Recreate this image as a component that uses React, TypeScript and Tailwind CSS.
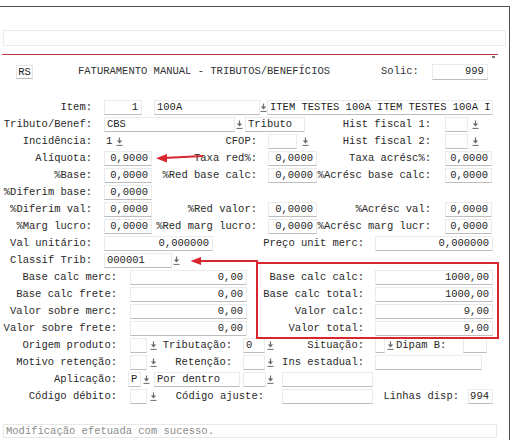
import React from 'react'

type P = { className?: string; children?: React.ReactNode }

const Drop = ({ className = '' }: P) => (
  <span className={`flex h-[15px] shrink-0 items-center justify-center ${className}`}>
    <svg width="7" height="9" viewBox="0 0 7 9">
      <path d="M3.5 0.5v4" stroke="#6b6b6b" strokeWidth="1.2" />
      <path d="M0.8 3.6h5.4L3.5 6.6z" fill="#6b6b6b" />
      <path d="M0.5 8.4h6" stroke="#6b6b6b" strokeWidth="1" />
    </svg>
  </span>
)

const Field = ({ className = '', children, right }: P & { right?: boolean }) => (
  <div
    className={`h-[15px] shrink-0 overflow-hidden whitespace-pre border border-[#ebebeb] border-b-[#bdbdbd] bg-white leading-[13px] text-[#1f1f1f] ${
      right ? 'pr-[3px] text-right' : 'pl-[2px]'
    } ${className}`}
  >
    {children}
  </div>
)

const Label = ({ className = '', children }: P) => (
  <span className={`shrink-0 whitespace-pre text-right leading-[15px] text-[#2a2a2a] ${className}`}>{children}</span>
)

const Row = ({ children }: P) => <div className="flex h-[17px] items-start">{children}</div>

// linhas de percentuais: tres colunas de campos
const Pct = ({ a, b, c, va, vb, vc }: { a: string; b?: string; c?: string; va: string; vb?: string; vc?: string }) => (
  <Row>
    <Label className="w-[92px]">{a}</Label>
    <Field right className="ml-[12px] w-[48px]">{va}</Field>
    {b && (
      <>
        <Label className="w-[105px]">{b}</Label>
        <Field right className="ml-[11px] w-[49px]">{vb}</Field>
        <Label className="w-[114px]">{c}</Label>
        <Field right className="ml-[14px] w-[47px]">{vc}</Field>
      </>
    )}
  </Row>
)

const Calc = ({ a, b, va, vb }: { a: string; b: string; va: string; vb: string }) => (
  <Row>
    <Label className="w-[117px]">{a}</Label>
    <Field right className="ml-[13px] w-[117px]">{va}</Field>
    <Label className="w-[117px]">{b}</Label>
    <Field right className="ml-[11px] w-[118px]">{vb}</Field>
  </Row>
)

export default function App() {
  return (
    <div className="relative h-[440px] w-[515px] overflow-hidden bg-white font-['Liberation_Mono',monospace] text-[10.5px] text-[#222]">
      <div className="mt-[6px] w-[510px] border-r border-t border-[#505050] pb-[40px]">
        <div className="ml-[3px] mt-[23px] h-[16px] w-[503px] border border-[#ececec]" />
        <div className="ml-[2px] mt-[8px] h-px w-[496px] bg-[#b93a3a]" />
        <div className="ml-[492px] mt-[1px] h-[2px] w-[3px] bg-[#777]" />

        {/* cabecalho */}
        <div className="mt-[6px] flex h-[16px] items-center">
          <div className="ml-[16px] h-[14px] w-[17px] border border-[#e4e4e4] border-b-[#bdbdbd] text-center leading-[12px]">RS</div>
          <span className="ml-[45px] whitespace-pre text-[#333]">FATURAMENTO MANUAL - TRIBUTOS/BENEFÍCIOS</span>
          <span className="ml-[51px] text-[#333]">Solic:</span>
          <Field right className="ml-[13px] !h-[16px] w-[56px]">999</Field>
        </div>

        <div className="mt-[20px]">
          <Row>
            <Label className="w-[92px]">Item:</Label>
            <Field right className="ml-[12px] w-[38px]">1</Field>
            <Field className="ml-[12px] w-[106px]">100A</Field>
            <Drop className="w-[7px]" />
            <Field className="w-[226px]">ITEM TESTES 100A ITEM TESTES 100A I</Field>
          </Row>
          <Row>
            <Label className="w-[92px]">Tributo/Benef:</Label>
            <Field className="ml-[12px] w-[131px]">CBS</Field>
            <Drop className="w-[8px]" />
            <Field className="ml-[2px] w-[60px]">Tributo</Field>
            <Label className="w-[126px]">Hist fiscal 1:</Label>
            <Field className="ml-[14px] w-[23px]" />
            <Drop className="ml-[3px] w-[8px]" />
          </Row>
          <Row>
            <Label className="w-[92px]">Incidência:</Label>
            <span className="ml-[12px] w-[11px] pl-[2px] leading-[15px]">1</span>
            <Drop className="w-[8px]" />
            <Label className="w-[134px]">CFOP:</Label>
            <Field className="ml-[11px] w-[29px]" />
            <Drop className="ml-[4px] w-[8px]" />
            <Label className="w-[122px]">Hist fiscal 2:</Label>
            <Field className="ml-[14px] w-[23px]" />
            <Drop className="ml-[3px] w-[8px]" />
          </Row>
          <Pct a="Alíquota:" va="0,9000" b="Taxa red%:" vb="0,0000" c="Taxa acrésc%:" vc="0,0000" />
          <Pct a="%Base:" va="0,0000" b="%Red base calc:" vb="0,0000" c="%Acrésc base calc:" vc="0,0000" />
          <Pct a="%Diferim base:" va="0,0000" />
          <Pct a="%Diferim val:" va="0,0000" b="%Red valor:" vb="0,0000" c="%Acrésc val:" vc="0,0000" />
          <Pct a="%Marg lucro:" va="0,0000" b="%Red marg lucro:" vb="0,0000" c="%Acrésc marg lucr:" vc="0,0000" />
          <Row>
            <Label className="w-[92px]">Val unitário:</Label>
            <Field right className="ml-[12px] w-[109px]">0,000000</Field>
            <Label className="w-[151px]">Preço unit merc:</Label>
            <Field right className="ml-[11px] w-[118px]">0,000000</Field>
          </Row>
          <Row>
            <Label className="w-[92px]">Classif Trib:</Label>
            <Field className="ml-[12px] w-[68px]">000001</Field>
            <Drop className="w-[9px]" />
          </Row>
          <Calc a="Base calc merc:" va="0,00" b="Base calc calc:" vb="1000,00" />
          <Calc a="Base calc frete:" va="0,00" b="Base calc total:" vb="1000,00" />
          <Calc a="Valor sobre merc:" va="0,00" b="Valor calc:" vb="9,00" />
          <Calc a="Valor sobre frete:" va="0,00" b="Valor total:" vb="9,00" />
          <Row>
            <Label className="w-[117px]">Origem produto:</Label>
            <Field className="ml-[13px] w-[17px]" />
            <Drop className="ml-[2px] w-[8px]" />
            <Label className="w-[75px]">Tributação:</Label>
            <Field className="ml-[11px] w-[22px]">0</Field>
            <Drop className="ml-[1px] w-[8px]" />
            <Label className="w-[90px]">Situação:</Label>
            <Field className="ml-[11px] w-[10px]" />
            <Drop className="ml-[1px] w-[8px]" />
            <Label className="ml-[2px] w-[51px] !text-left">Dipam B:</Label>
            <Field className="ml-[16px] w-[24px]" />
          </Row>
          <Row>
            <Label className="w-[117px]">Motivo retenção:</Label>
            <Field className="ml-[13px] w-[17px]" />
            <Drop className="ml-[2px] w-[8px]" />
            <Label className="w-[75px]">Retenção:</Label>
            <Field className="ml-[11px] w-[22px]" />
            <Drop className="ml-[1px] w-[8px]" />
            <Label className="w-[90px]">Ins estadual:</Label>
            <Field className="ml-[11px] w-[107px]" />
          </Row>
          <Row>
            <Label className="w-[117px]">Aplicação:</Label>
            <Field className="ml-[11px] w-[13px]">P</Field>
            <Drop className="ml-[1px] w-[8px]" />
            <Field className="ml-[4px] w-[86px]">Por dentro</Field>
            <Field className="ml-[3px] w-[23px]" />
            <Drop className="w-[8px]" />
            <Field className="ml-[8px] w-[91px]" />
          </Row>
          <Row>
            <Label className="w-[117px]">Código débito:</Label>
            <Field className="ml-[13px] w-[17px]" />
            <Drop className="ml-[2px] w-[8px]" />
            <Label className="w-[107px]">Código ajuste:</Label>
            <Field className="ml-[18px] w-[91px]" />
            <Label className="w-[86px]">Linhas disp:</Label>
            <Field right className="ml-[9px] w-[25px]">994</Field>
          </Row>
        </div>

        <div className="ml-[3px] mt-[18px] h-[14px] w-[494px] border border-[#e8e8e8] pl-[2px] leading-[12px] text-[#8c8c8c]">
          Modificação efetuada com sucesso.
        </div>
      </div>

      {/* marcacoes em vermelho */}
      <svg className="pointer-events-none absolute left-0 top-0" width="515" height="440">
        <path d="M203 156 L164 158" stroke="#d7262e" strokeWidth="2" />
        <path d="M156 158.2 L167 154 L167 162.4z" fill="#d7262e" />
        <path d="M258 261 L198 261" stroke="#d7262e" strokeWidth="2" />
        <path d="M190.5 261 L201 257 L201 265z" fill="#d7262e" />
        <rect x="257" y="263" width="241" height="75" fill="none" stroke="#d7262e" strokeWidth="2" />
      </svg>
    </div>
  )
}
